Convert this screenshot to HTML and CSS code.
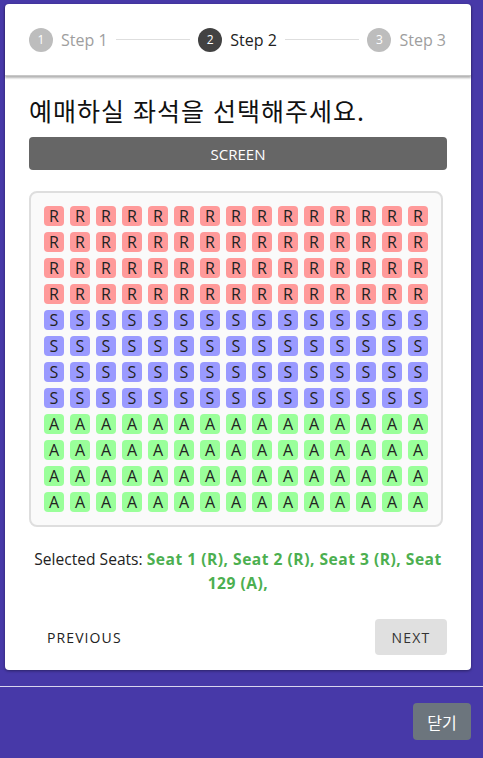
FILE: index.html
```html
<!DOCTYPE html>
<html lang="ko">
<head>
<meta charset="utf-8">
<title>좌석 선택</title>
<link rel="stylesheet" href="styles.css">
</head>
<body>
<div class="modal">
  <div class="card">
    <div class="stepper">
      <div class="step"><span class="circle">1</span><span class="label">Step 1</span></div>
      <div class="connector"></div>
      <div class="step active"><span class="circle">2</span><span class="label">Step 2</span></div>
      <div class="connector"></div>
      <div class="step"><span class="circle">3</span><span class="label">Step 3</span></div>
    </div>
    <div class="content">
      <h2 class="title">예매하실 좌석을 선택해주세요.</h2>
      <div class="screen">SCREEN</div>
      <div class="seats" id="seats"></div>
      <p class="selected">Selected Seats: <b>Seat 1 (R), Seat 2 (R), Seat 3 (R), Seat 129 (A),</b></p>
      <div class="actions">
        <button class="btn-text">Previous</button>
        <button class="btn-next">Next</button>
      </div>
    </div>
  </div>
  <div class="footer">
    <button class="btn-close">닫기</button>
  </div>
</div>
<script src="script.js"></script>
</body>
</html>
```

FILE: styles.css
```css
* { box-sizing: border-box; }
html, body { margin: 0; padding: 0; }
body {
  background: #4739a8;
  font-family: "Open Sans", "Noto Sans", "Noto Sans CJK KR", sans-serif;
  height: 758px;
  overflow: hidden;
}
.modal { display: flex; flex-direction: column; }
.card {
  background: #fff;
  margin: 4px 12px 0 5px;
  border-radius: 4px;
  box-shadow: 0 1px 3px rgba(0,0,0,0.4);
  height: 666px;
}
.stepper {
  display: flex;
  align-items: center;
  padding: 24px 25px 24px 24px;
  height: 72px;
  box-shadow: 0 2px 2px rgba(0,0,0,0.3);
  border-bottom: 1px solid #c8c8c8;
}
.step { display: flex; align-items: center; }
.circle {
  width: 24px; height: 24px; border-radius: 50%;
  background: #bdbdbd; color: #fff;
  font-size: 12px; display: flex; align-items: center; justify-content: center;
}
.label { margin-left: 8px; font-size: 16px; color: #9e9e9e; }
.step.active .circle { background: #424242; }
.step.active .label { color: #222; }
.connector { flex: 1; height: 1px; background: #dedede; margin: 0 8px; }
.content { padding: 16px 24px 0 24px; }
.title {
  margin: 0;
  font-family: "Noto Sans CJK KR", sans-serif;
  font-weight: 400;
  font-size: 25px;
  letter-spacing: 1px;
  line-height: 36px;
  color: #111;
}
.screen {
  margin-top: 9px;
  height: 33px;
  background: #666;
  color: #fff;
  border-radius: 4px;
  display: flex; align-items: center; justify-content: center;
  font-size: 15px;
}
.seats {
  margin-top: 21px;
  width: 414px;
  border: 2px solid #dedede;
  border-radius: 8px;
  background: #fafafa;
  padding: 10px;
  display: grid;
  grid-template-columns: repeat(15, 26px);
}
.seat {
  width: 20px; height: 20px; margin: 3px;
  border-radius: 4px;
  display: flex; align-items: center; justify-content: center;
  font-size: 16px; color: #222; line-height: 1;
}
.seat.r { background: #ff9a9a; }
.seat.s { background: #9a9aff; }
.seat.a { background: #9aff9a; }
.selected {
  margin: 20px 0 0 0;
  text-align: center;
  font-size: 15.6px;
  line-height: 24px;
  color: #222;
  padding: 0 4px;
}
.selected b { color: #4caf50; font-weight: 700; letter-spacing: 0.5px; }
.actions {
  margin-top: 24px;
  display: flex;
  justify-content: space-between;
}
button { font-family: inherit; cursor: pointer; border: 0; }
.btn-text {
  background: transparent;
  text-transform: uppercase;
  font-size: 14px;
  letter-spacing: 1.1px;
  color: #222;
  height: 36px;
  padding: 0 18px;
}
.btn-next {
  background: #e0e0e0;
  border-radius: 4px;
  text-transform: uppercase;
  font-size: 14px;
  letter-spacing: 1.2px;
  color: #333;
  height: 36px;
  width: 72px;
}
.footer {
  margin-top: 16px;
  border-top: 1px solid #d8d6ee;
  display: flex;
  justify-content: flex-end;
  padding: 16px 12px 0 0;
}
.btn-close {
  background: #6c757d;
  color: #fff;
  border-radius: 4px;
  font-family: "Noto Sans CJK KR", sans-serif;
  font-size: 16px;
  height: 37px;
  width: 58px;
}
```

FILE: script.js
```js
var rows = ["r","r","r","r","s","s","s","s","a","a","a","a"];
var box = document.getElementById("seats");
rows.forEach(function (t) {
  for (var i = 0; i < 15; i++) {
    var d = document.createElement("div");
    d.className = "seat " + t;
    d.textContent = t.toUpperCase();
    box.appendChild(d);
  }
});
```
